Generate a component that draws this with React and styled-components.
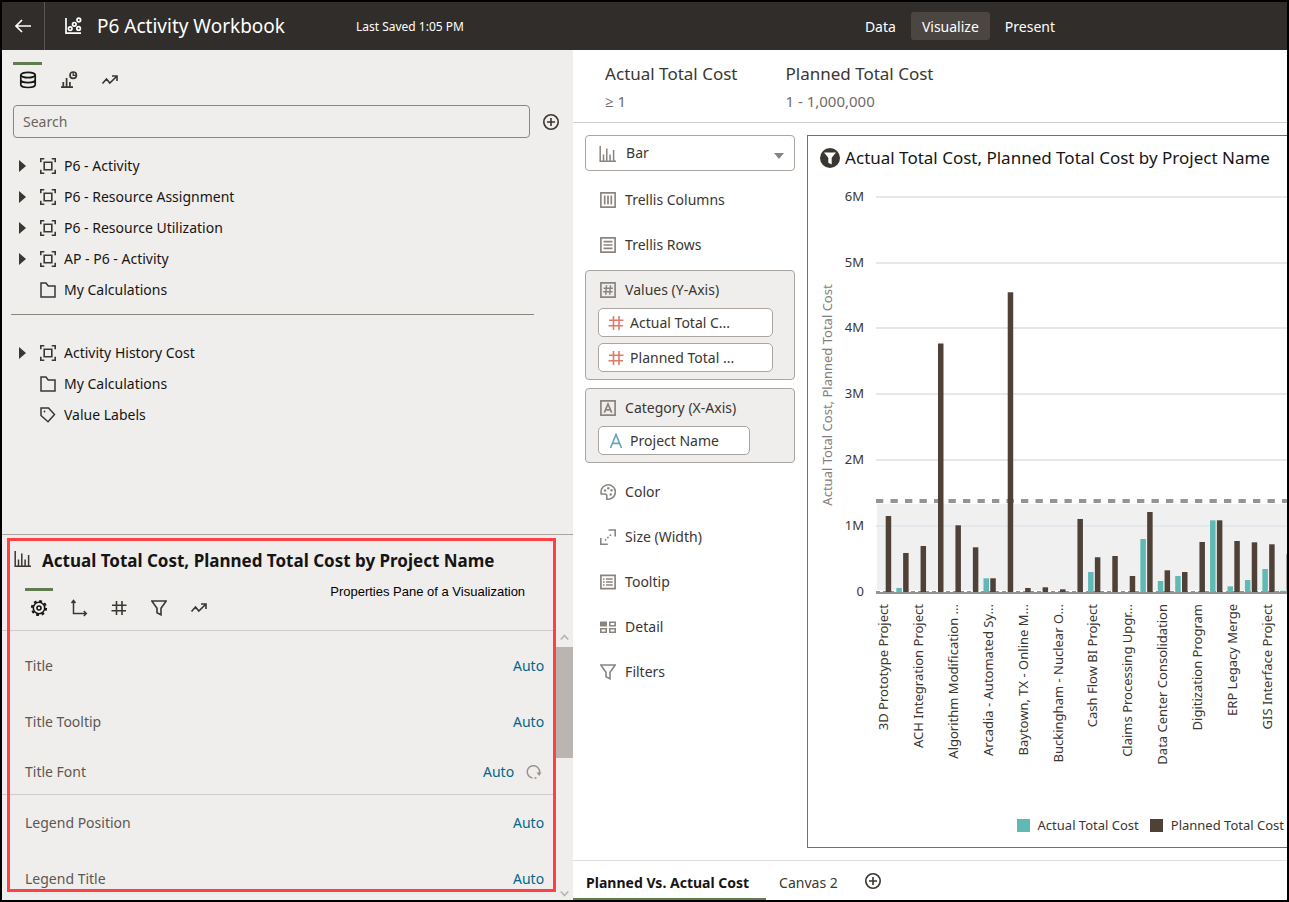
import React from "react";
import styled, { createGlobalStyle, css } from "styled-components";

const font = `"Noto Sans", "Open Sans", sans-serif`;
const c = {
  header: "#312d2a",
  panel: "#f0eeec",
  ink: "#161513",
  text: "#3a3631",
  muted: "#716b66",
  icon: "#8b8580",
  line: "#d0cccb",
  edge: "#aaa5a1",
  green: "#5f7d4f",
  link: "#00688c",
  teal: "#5fb9b5",
  brown: "#4f4137",
  red: "#ff4145",
};

const GlobalStyle = createGlobalStyle`
  *, *::before, *::after { box-sizing: border-box; }
  body { margin: 0; font: 13px/20px ${font}; color: ${c.ink}; background: #fff; }
  button, input, select { font: inherit; color: inherit; }
  button { margin: 0; padding: 0; border: 0; background: none; cursor: pointer; }
  h1, h2, p, ul { margin: 0; padding: 0; font-weight: 400; }
  ul { list-style: none; }
  svg { display: block; flex: none; }
`;

/* ---------- icons ---------- */

const Svg = ({ size = 16, box = 16, sw = 1.3, children, ...rest }) => (
  <svg width={size} height={size} viewBox={`0 0 ${box} ${box}`} fill="none" stroke="currentColor" strokeWidth={sw} aria-hidden="true" {...rest}>
    {children}
  </svg>
);
const BackIcon = () => (
  <Svg size={18} box={18} sw={1.7}><path d="M17 9H2M8 3L2 9l6 6" /></Svg>
);
const ScatterIcon = () => (
  <Svg size={18} box={18} sw={1.7}>
    <path d="M2 1v15.2h15" />
    <circle cx="6.2" cy="11.6" r="1.8" /><circle cx="10.3" cy="7.3" r="1.8" /><circle cx="14.8" cy="3" r="1.8" /><circle cx="14.6" cy="11.4" r="1.8" />
  </Svg>
);
const DatabaseIcon = () => (
  <Svg size={18} box={18} sw={1.7}>
    <ellipse cx="9" cy="4" rx="7.2" ry="2.7" />
    <path d="M1.800 4v9.800c0 1.500 3.200 2.700 7.200 2.700s7.200-1.200 7.200-2.700V4M1.800 9c0 1.500 3.200 2.700 7.200 2.700s7.200-1.200 7.200-2.700" />
  </Svg>
);
const ChartClockIcon = () => (
  <Svg size={18} box={18} sw={1.7}>
    <path d="M1 16.200h12M3.300 16V11M6.600 16V7M9.900 16v-5" />
    <circle cx="13.200" cy="4.200" r="3.200" /><path d="M13.200 1.500v2.800h2.600" strokeWidth="1.300" />
  </Svg>
);
const TrendIcon = () => (
  <Svg size={18} box={18} sw={1.6}><path d="M1.500 12.500L5.500 8l3.300 4 6.700-6.500M11 5h5v5" /></Svg>
);
const PlusCircleIcon = () => (
  <Svg size={18} box={18} sw={1.6}><circle cx="9" cy="9" r="7.200" /><path d="M9 5v8M5 9h8" /></Svg>
);
const DatasetIcon = () => (
  <Svg sw={1.6}><path d="M.8 4.300V.8h3.500M11.700.8h3.500v3.500M15.200 11.700v3.500h-3.500M4.300 15.200H.8v-3.500M4.200 4.200h7.600v7.600H4.200z" /></Svg>
);
const FolderIcon = () => (
  <Svg sw={1.5}><path d="M1 1h5l2.200 3H15v11H1z" /></Svg>
);
const TagIcon = () => (
  <Svg sw={1.5}><path d="M1 1h7.500l6 6.500L8 14.700 1 8.500z" /><circle cx="4.500" cy="4.500" r=".9" fill="currentColor" stroke="none" /></Svg>
);
const BarIcon = () => (
  <Svg size={18} box={18} sw={1.5}><path d="M1.200 1v15.300H17M4.500 16V9.500M7.800 16V3.500M11.100 16V9.500M14.600 16V5" /></Svg>
);
const GearIcon = () => (
  <Svg size={18} box={18} sw={1.6}>
    <circle cx="9" cy="9" r="5.700" /><circle cx="9" cy="9" r="2" />
    <circle cx="9" cy="9" r="7.100" strokeDasharray="2.790 2.790" strokeWidth="2" />
  </Svg>
);
const AxesIcon = () => (
  <Svg size={18} box={18} sw={1.5}><path d="M3.500 2v12.500H16M1.500 4l2-2.500 2 2.500M13.800 12l2.500 2.500-2.500 2.500" /></Svg>
);
const HashIcon = () => (
  <Svg size={16} sw={1.600}><path d="M5.500 1v14M11 1v14M1 5.200h14.500M.5 10.800H15" /></Svg>
);
const FunnelIcon = () => (
  <Svg sw={1.600}><path d="M.8 1h14.400L10 8.200v6.600l-4-2V8.200z" /></Svg>
);
const ResetIcon = () => (
  <Svg size={16} sw={1.500}><path d="M6.500 14A6.200 6.200 0 1 1 13.500 9M8.500 14.200a6 6 0 0 0 2-.6" /><path d="M10.500 8.500h5L13.200 12z" fill="currentColor" stroke="none" /></Svg>
);
const ColumnsIcon = () => (
  <Svg sw={1.700}><path d="M.9.9h14.200v14.200H.9zM4.700 3.500v9M8 3.500v9M11.300 3.500v9" /></Svg>
);
const RowsIcon = () => (
  <Svg sw={1.700}><path d="M.9.9h14.200v14.200H.9zM3.500 4.700h9M3.500 8h9M3.500 11.300h9" /></Svg>
);
const MeasureIcon = () => (
  <Svg sw={1.700}><path d="M.9.9h14.200v14.200H.9z" /><path d="M6.500 3.300l-.8 9.400M10.500 3.300l-.8 9.400M3.500 6.200h9.400M3.200 9.800h9.400" strokeWidth="1.500" /></Svg>
);
const AttributeIcon = () => (
  <Svg sw={1.700}><path d="M.9.9h14.200v14.200H.9z" /><path d="M4.300 12.700L8 4l3.700 8.700M5.500 9.900h5" strokeWidth="1.700" /></Svg>
);
const LetterAIcon = () => (
  <Svg sw={1.700}><path d="M2.500 15L8 1.500 13.500 15M4.500 10.300h7" /></Svg>
);
const PaletteIcon = () => (
  <Svg sw={1.600}>
    <path d="M1 8.200A7.200 7.200 0 1 1 8.500 15.200H6.800V12c0-1.300-1-2-2.200-2H1.200z" />
    <g fill="currentColor" stroke="none"><circle cx="5" cy="6.500" r="1.200" /><circle cx="8.300" cy="4.200" r="1.200" /><circle cx="11.500" cy="6.300" r="1.200" /><circle cx="10.700" cy="10.500" r="1.200" /></g>
  </Svg>
);
const SizeIcon = () => (
  <Svg sw={1.600}><path d="M8.500 1h6.700v6.500M.8 9v6.200h7" /><path d="M5 11.500l7-7" strokeDasharray="1.600 1.800" /></Svg>
);
const TooltipIcon = () => (
  <Svg sw={1.700}><path d="M.9 1.300h14.200v13.400H.9zM6 5h6.800M6 8h6.800M6 11h6.800M3 5h1.600M3 8h1.600M3 11h1.600" /></Svg>
);
const DetailIcon = () => (
  <Svg>
    <path d="M0 2.500h7v5H0z" fill="currentColor" stroke="none" />
    <path d="M9.800 3.300h5.400v3.400H9.800zM.8 9.800h5.400v3.400H.8zM9.800 9.800h5.400v3.400H9.800z" strokeWidth="1.600" />
  </Svg>
);
const FilterBadgeIcon = () => (
  <Svg size={20} box={20}>
    <circle cx="10" cy="10" r="10" fill="#3a3631" stroke="none" />
    <path d="M4 4.500h12l-4.300 5.300v6.700l-3.400-1.800V9.800z" fill="#fff" stroke="none" />
  </Svg>
);
const Chevron = ({ down }) => (
  <Svg size={9} box={9} sw={1.800}><path d={down ? "M.8 2.500l3.700 4 3.700-4" : "M.8 6.500l3.700-4 3.700 4"} /></Svg>
);
const Caret = () => (
  <Svg size={8} box={8} height={12} viewBox="0 0 8 12"><path d="M0 0l7 6-7 6z" fill="currentColor" stroke="none" /></Svg>
);

/* ---------- shell ---------- */

const Shell = styled.div`
  display: flex;
  flex-direction: column;
  height: 100vh;
  border: 2px solid #000;
  overflow: hidden;
`;
const Header = styled.header`
  display: flex;
  align-items: center;
  flex: none;
  height: 48px;
  color: #fff;
  background: ${c.header};
`;
const BackButton = styled.button`
  display: grid;
  place-items: center;
  width: 43px;
  height: 48px;
  border-right: 1px solid #5b5652;
`;
const WorkbookTitle = styled.h1`
  display: flex;
  align-items: center;
  gap: 15px;
  margin-left: 19px;
  font-size: 19px;
  line-height: 28px;
  white-space: nowrap;
`;
const Saved = styled.span`
  margin-left: 71px;
  padding-top: 2px;
  font-size: 12px;
  white-space: nowrap;
`;
const Modes = styled.nav`
  display: flex;
  gap: 4px;
  margin: 0 221px 0 auto;
`;
const ModeButton = styled.button`
  height: 28px;
  padding: 2px 11px 0;
  border-radius: 3px;
  font-size: 14px;
  background: ${(p) => (p.$active ? "#4b4642" : "transparent")};
`;
const Body = styled.div`
  display: grid;
  grid-template-columns: minmax(0, 4fr) minmax(0, 5fr);
  flex: 1;
  min-height: 0;
`;
const Sidebar = styled.aside`
  display: flex;
  flex-direction: column;
  min-height: 0;
  background: ${c.panel};
`;
const Main = styled.main`
  display: flex;
  flex-direction: column;
  min-width: 0;
  min-height: 0;
  background: #fff;
`;

/* ---------- data pane ---------- */

const DataPane = styled.section`
  flex: 1;
  min-height: 0;
  padding: 12px 11px 0;
  overflow: hidden;
`;
const IconTabs = styled.div`
  display: flex;
  gap: 12px;
  margin-top: ${(p) => (p.$tall ? 3 : 0)}px;
  color: ${c.text};
  button {
    width: ${(p) => (p.$tall ? 28 : 29)}px;
    height: ${(p) => (p.$tall ? 37 : 32)}px;
  }
`;
const IconTab = styled.button`
  display: grid;
  place-items: center;
  border-top: 3px solid transparent;
  ${(p) => p.$active && css`border-top-color: ${c.green}; color: ${c.ink};`}
`;
const SearchRow = styled.div`
  display: flex;
  align-items: center;
  gap: 12px;
  margin-top: 11px;
`;
const SearchInput = styled.input`
  flex: 1;
  min-width: 0;
  height: 33px;
  padding: 0 9px;
  border: 1px solid ${c.icon};
  border-radius: 4px;
  background: transparent;
  font-size: 14px;
  &::placeholder { color: #6a6560; opacity: 1; }
`;
const RoundButton = styled.button`
  display: grid;
  place-items: center;
  width: 18px;
  height: 18px;
  margin: 0 2px 0 ${(p) => p.$start || 0}px;
  color: ${c.text};
`;
const Tree = styled.ul`
  padding-top: ${(p) => p.$top}px;
`;
const TreeItem = styled.li`
  display: grid;
  grid-template-columns: 15px 16px 1fr;
  align-items: center;
  column-gap: 6px;
  height: 31px;
  padding-left: 6px;
  font-size: 14px;
  color: ${c.text};
`;
const TreeLabel = styled.span`
  padding-left: 2px;
  color: ${c.ink};
`;
const Divider = styled.hr`
  height: 1px;
  margin: 9px 28px 0 -2px;
  border: 0;
  background: ${c.icon};
`;

const IconSlot = { dataset: DatasetIcon, folder: FolderIcon, tag: TagIcon };
const TreeRow = ({ kind, children }) => {
  const Icon = IconSlot[kind];
  return (
    <TreeItem>
      {kind === "dataset" ? <button aria-label={`Expand ${children}`}><Caret /></button> : <span />}
      <Icon />
      <TreeLabel>{children}</TreeLabel>
    </TreeItem>
  );
};

/* ---------- properties pane ---------- */

const PropertiesPane = styled.section`
  position: relative;
  display: flex;
  flex-direction: column;
  flex: 0 0 366px;
  min-height: 0;
  border-top: 1px solid ${c.edge};
`;
const Highlight = styled.div`
  position: absolute;
  inset: 3px 17px 8px 5px;
  border: 3px solid ${c.red};
  pointer-events: none;
`;
const PaneTitle = styled.h2`
  display: flex;
  align-items: center;
  gap: 10px;
  flex: none;
  height: 50px;
  padding: 2px 0 0 12px;
  font-size: 17px;
  font-weight: 700;
  white-space: nowrap;
  svg { color: ${c.text}; margin-bottom: 4px; }
`;
const PaneTools = styled.div`
  display: flex;
  justify-content: space-between;
  flex: none;
  height: 46px;
  margin-right: 17px;
  padding: 0 31px 0 23px;
  border-bottom: 1px solid ${c.line};
`;
const Caption = styled.p`
  font: 13px/14px "Liberation Sans", Arial, sans-serif;
  white-space: nowrap;
  color: #000;
`;
const ScrollArea = styled.div`
  display: flex;
  flex: 1;
  min-height: 0;
  overflow: hidden;
`;
const PropertyList = styled.div`
  flex: 1;
  padding-top: 7px;
`;
const PropertyRow = styled.div`
  display: flex;
  align-items: center;
  justify-content: space-between;
  height: ${(p) => (p.$compact ? 45 : 56)}px;
  padding: 0 12px 0 23px;
  border-bottom: ${(p) => (p.$compact ? `1px solid ${c.line}` : 0)};
  font-size: 14px;
  color: #5c5753;
`;
const PropertyValue = styled.div`
  display: flex;
  align-items: center;
  gap: 12px;
  color: #98928d;
`;
const AutoButton = styled.button`
  color: ${c.link};
  font-size: 14px;
`;
const ResetButton = styled.button`
  padding-right: 2px;
`;
const ScrollTrack = styled.div`
  display: flex;
  flex-direction: column;
  align-items: center;
  width: 17px;
  padding: 2px 0;
  color: #bab4b0;
`;
const ScrollThumb = styled.div`
  width: 17px;
  height: 111px;
  margin: 5px 0 auto;
  background: #bab5b1;
`;

const Property = ({ name, compact }) => (
  <PropertyRow $compact={compact}>
    <span>{name}</span>
    <PropertyValue>
      <AutoButton aria-label={`${name}: Auto`}>Auto</AutoButton>
      {compact && <ResetButton aria-label={`Reset ${name}`}><ResetIcon /></ResetButton>}
    </PropertyValue>
  </PropertyRow>
);

/* ---------- filter bar, grammar panel ---------- */

const FilterBar = styled.div`
  display: flex;
  gap: 48px;
  flex: none;
  height: 73px;
  padding: 12px 0 0 32px;
  border-bottom: 1px solid ${c.line};
`;
const FilterName = styled.p`
  font-size: 17px;
  line-height: 24px;
  white-space: nowrap;
  color: ${c.text};
`;
const FilterValue = styled.p`
  margin-top: 5px;
  font-size: 15px;
  white-space: nowrap;
  color: ${c.muted};
`;
const Workspace = styled.div`
  display: flex;
  gap: 12px;
  flex: 1;
  min-height: 0;
  padding: 12px 0 12px 12px;
`;
const Grammar = styled.div`
  display: flex;
  flex-direction: column;
  flex: none;
  width: 210px;
  color: ${c.text};
`;
const Picker = styled.div`
  position: relative;
  height: 36px;
  margin-bottom: 6px;
  color: ${c.icon};
`;
const PickerSelect = styled.select`
  width: 100%;
  height: 36px;
  padding: 0 40px;
  appearance: none;
  border: 1px solid ${c.edge};
  border-radius: 4px;
  background: #fff;
  font-size: 14px;
  color: ${c.text};
`;
const PickerIcon = styled.span`
  position: absolute;
  top: 10px;
  left: 14px;
  pointer-events: none;
`;
const PickerArrow = styled.span`
  position: absolute;
  top: 18px;
  right: 11px;
  border: 5px solid transparent;
  border-top: 6px solid ${c.icon};
  border-bottom: 0;
  pointer-events: none;
`;
const Slot = styled.div`
  display: flex;
  align-items: center;
  gap: 9px;
  height: ${(p) => (p.$boxed ? 37 : 45)}px;
  padding-left: ${(p) => (p.$boxed ? 2 : 15)}px;
  font-size: 14px;
  svg { color: ${c.icon}; }
`;
const SlotBox = styled.div`
  display: flex;
  flex-direction: column;
  align-items: flex-start;
  margin-top: ${(p) => p.$top}px;
  margin-bottom: ${(p) => p.$bottom || 0}px;
  padding: 0 12px 7px;
  border: 1px solid ${c.edge};
  border-radius: 4px;
  background: ${c.panel};
`;
const Pill = styled.button`
  display: flex;
  align-items: center;
  gap: 6px;
  width: ${(p) => p.$width}px;
  height: 29px;
  padding-left: 9px;
  border: 1px solid ${c.edge};
  border-radius: 5px;
  background: #fff;
  font-size: 14px;
  white-space: nowrap;
  & + & { margin-top: 6px; }
  svg { color: ${(p) => (p.$measure ? "#e07a68" : "#6ba5bd")}; }
`;

/* ---------- chart ---------- */

const ChartCard = styled.section`
  display: flex;
  flex-direction: column;
  flex: 1;
  min-width: 0;
  border: 1px solid ${c.green};
  border-right: 0;
  overflow: hidden;
`;
const ChartTitle = styled.h2`
  display: flex;
  align-items: center;
  gap: 5px;
  flex: none;
  height: 44px;
  padding-left: 12px;
  font-size: 17px;
  white-space: nowrap;
`;
const Plot = styled.svg`
  width: 100%;
  height: 600px;
  overflow: hidden;
  font-size: 13px;
  fill: ${c.text};
`;
const Legend = styled.div`
  display: flex;
  justify-content: flex-end;
  gap: 11px;
  margin-top: 35px;
  padding-right: 3px;
  font-size: 13px;
  white-space: nowrap;
  color: ${c.text};
`;
const LegendItem = styled.span`
  display: flex;
  align-items: center;
  gap: 8px;
  &::before {
    content: "";
    width: 13px;
    height: 13px;
    background: ${(p) => p.$color};
  }
`;

const planned = [1153, 592, 698, 3771, 1012, 678, 208, 4548, 61, 71, 41, 1108, 527, 546, 243, 1214, 329, 303, 759, 1088, 774, 754, 724, 577];
const actual = { 1: 61, 6: 208, 12: 303, 15: 804, 16: 167, 17: 243, 19: 1088, 20: 86, 21: 182, 22: 349, 23: 20 };
const projects = [
  "3D Prototype Project", "ACH Integration Project", "Algorithm Modification ...", "Arcadia - Automated Sy...",
  "Baytown, TX - Online M...", "Buckingham - Nuclear O...", "Cash Flow BI Project", "Claims Processing Upgr...",
  "Data Center Consolidation", "Digitization Program", "ERP Legacy Merge", "GIS Interface Project",
];
const BASE = 412;
const MILLION = 65.9;
const barHeight = (k) => (k / 1000) * MILLION;
const barX = (i) => 77.7 + i * 17.43;
const gridY = (m) => Math.round(BASE - m * MILLION);

const Chart = () => (
  <Plot role="img" aria-label="Actual and planned total cost by project">
    <rect x="69" y="324" width="100%" height="86" fill="#f0f0f0" />
    {[1, 2, 3, 4, 5, 6].map((m) => (
      <line key={m} x1="68" x2="100%" y1={gridY(m)} y2={gridY(m)} stroke="#e4e8ec" strokeWidth="2" />
    ))}
    {[0, 1, 2, 3, 4, 5, 6].map((m) => (
      <text key={m} x="56" y={gridY(m) + 4} textAnchor="end">{m ? `${m}M` : "0"}</text>
    ))}
    <text transform="translate(24 215) rotate(-90)" textAnchor="middle" fill="#82807e">Actual Total Cost, Planned Total Cost</text>
    <line x1="68" x2="100%" y1="321" y2="321" stroke="#949494" strokeWidth="4" strokeDasharray="7.3 7.2" />
    <line x1="68" x2="100%" y1="411.5" y2="411.5" stroke="#949494" strokeWidth="1" strokeDasharray="4 3" />
    {planned.map((v, i) => (
      <rect key={i} x={barX(i)} y={BASE - barHeight(v)} width="5.5" height={barHeight(v)} fill={c.brown} />
    ))}
    {Object.entries(actual).map(([i, v]) => (
      <rect key={i} x={barX(+i) - 6.8} y={BASE - barHeight(v)} width="5.5" height={barHeight(v)} fill={c.teal} />
    ))}
    <line x1="68" x2="100%" y1="413" y2="413" stroke="#949494" strokeWidth="2" />
    {projects.map((name, i) => (
      <text key={name} transform={`translate(${Math.round(80 + i * 34.9)} 424) rotate(-90)`} textAnchor="end">{name}</text>
    ))}
  </Plot>
);

/* ---------- canvas tabs ---------- */

const CanvasTabs = styled.nav`
  display: flex;
  align-items: center;
  flex: none;
  height: 40px;
  border-top: 1px solid #e0dedc;
`;
const CanvasTab = styled.button`
  height: 39px;
  padding: 6px 17px 0 13px;
  border-bottom: 2px solid ${(p) => (p.$active ? c.green : "transparent")};
  font-size: 14px;
  font-weight: ${(p) => (p.$active ? 700 : 400)};
  color: ${(p) => (p.$active ? c.ink : c.text)};
  white-space: nowrap;
`;

export default function App() {
  return (
    <>
      <GlobalStyle />
      <Shell>
        <Header>
          <BackButton aria-label="Back"><BackIcon /></BackButton>
          <WorkbookTitle><ScatterIcon />P6 Activity Workbook</WorkbookTitle>
          <Saved>Last Saved 1:05 PM</Saved>
          <Modes>
            <ModeButton>Data</ModeButton>
            <ModeButton $active>Visualize</ModeButton>
            <ModeButton>Present</ModeButton>
          </Modes>
        </Header>
        <Body>
          <Sidebar>
            <DataPane>
              <IconTabs>
                <IconTab $active aria-label="Data"><DatabaseIcon /></IconTab>
                <IconTab aria-label="Visualizations"><ChartClockIcon /></IconTab>
                <IconTab aria-label="Analytics"><TrendIcon /></IconTab>
              </IconTabs>
              <SearchRow>
                <SearchInput type="search" placeholder="Search" aria-label="Search" />
                <RoundButton aria-label="Add"><PlusCircleIcon /></RoundButton>
              </SearchRow>
              <Tree $top={12}>
                <TreeRow kind="dataset">P6 - Activity</TreeRow>
                <TreeRow kind="dataset">P6 - Resource Assignment</TreeRow>
                <TreeRow kind="dataset">P6 - Resource Utilization</TreeRow>
                <TreeRow kind="dataset">AP - P6 - Activity</TreeRow>
                <TreeRow kind="folder">My Calculations</TreeRow>
              </Tree>
              <Divider />
              <Tree $top={22}>
                <TreeRow kind="dataset">Activity History Cost</TreeRow>
                <TreeRow kind="folder">My Calculations</TreeRow>
                <TreeRow kind="tag">Value Labels</TreeRow>
              </Tree>
            </DataPane>
            <PropertiesPane>
              <PaneTitle><BarIcon />Actual Total Cost, Planned Total Cost by Project Name</PaneTitle>
              <PaneTools>
                <IconTabs $tall>
                  <IconTab $active aria-label="General"><GearIcon /></IconTab>
                  <IconTab aria-label="Axis"><AxesIcon /></IconTab>
                  <IconTab aria-label="Values"><HashIcon /></IconTab>
                  <IconTab aria-label="Filters"><FunnelIcon /></IconTab>
                  <IconTab aria-label="Analytics"><TrendIcon /></IconTab>
                </IconTabs>
                <Caption>Properties Pane of a Visualization</Caption>
              </PaneTools>
              <ScrollArea>
                <PropertyList>
                  <Property name="Title" />
                  <Property name="Title Tooltip" />
                  <Property name="Title Font" compact />
                  <Property name="Legend Position" />
                  <Property name="Legend Title" />
                </PropertyList>
                <ScrollTrack>
                  <Chevron />
                  <ScrollThumb />
                  <Chevron down />
                </ScrollTrack>
              </ScrollArea>
              <Highlight />
            </PropertiesPane>
          </Sidebar>
          <Main>
            <FilterBar>
              <div>
                <FilterName>Actual Total Cost</FilterName>
                <FilterValue>≥ 1</FilterValue>
              </div>
              <div>
                <FilterName>Planned Total Cost</FilterName>
                <FilterValue>1 - 1,000,000</FilterValue>
              </div>
            </FilterBar>
            <Workspace>
              <Grammar>
                <Picker>
                  <PickerSelect aria-label="Visualization type" defaultValue="Bar">
                    <option>Bar</option>
                  </PickerSelect>
                  <PickerIcon><BarIcon /></PickerIcon>
                  <PickerArrow />
                </Picker>
                <Slot><ColumnsIcon />Trellis Columns</Slot>
                <Slot><RowsIcon />Trellis Rows</Slot>
                <SlotBox $top={3}>
                  <Slot $boxed><MeasureIcon />Values (Y-Axis)</Slot>
                  <Pill $width={175} $measure><HashIcon />Actual Total C...</Pill>
                  <Pill $width={175} $measure><HashIcon />Planned Total ...</Pill>
                </SlotBox>
                <SlotBox $top={8} $bottom={6}>
                  <Slot $boxed><AttributeIcon />Category (X-Axis)</Slot>
                  <Pill $width={152}><LetterAIcon />Project Name</Pill>
                </SlotBox>
                <Slot><PaletteIcon />Color</Slot>
                <Slot><SizeIcon />Size (Width)</Slot>
                <Slot><TooltipIcon />Tooltip</Slot>
                <Slot><DetailIcon />Detail</Slot>
                <Slot><FunnelIcon />Filters</Slot>
              </Grammar>
              <ChartCard>
                <ChartTitle><FilterBadgeIcon />Actual Total Cost, Planned Total Cost by Project Name</ChartTitle>
                <Chart />
                <Legend>
                  <LegendItem $color={c.teal}>Actual Total Cost</LegendItem>
                  <LegendItem $color={c.brown}>Planned Total Cost</LegendItem>
                </Legend>
              </ChartCard>
            </Workspace>
            <CanvasTabs aria-label="Canvases">
              <CanvasTab $active>Planned Vs. Actual Cost</CanvasTab>
              <CanvasTab>Canvas 2</CanvasTab>
              <RoundButton $start={9} aria-label="Add canvas"><PlusCircleIcon /></RoundButton>
            </CanvasTabs>
          </Main>
        </Body>
      </Shell>
    </>
  );
}
